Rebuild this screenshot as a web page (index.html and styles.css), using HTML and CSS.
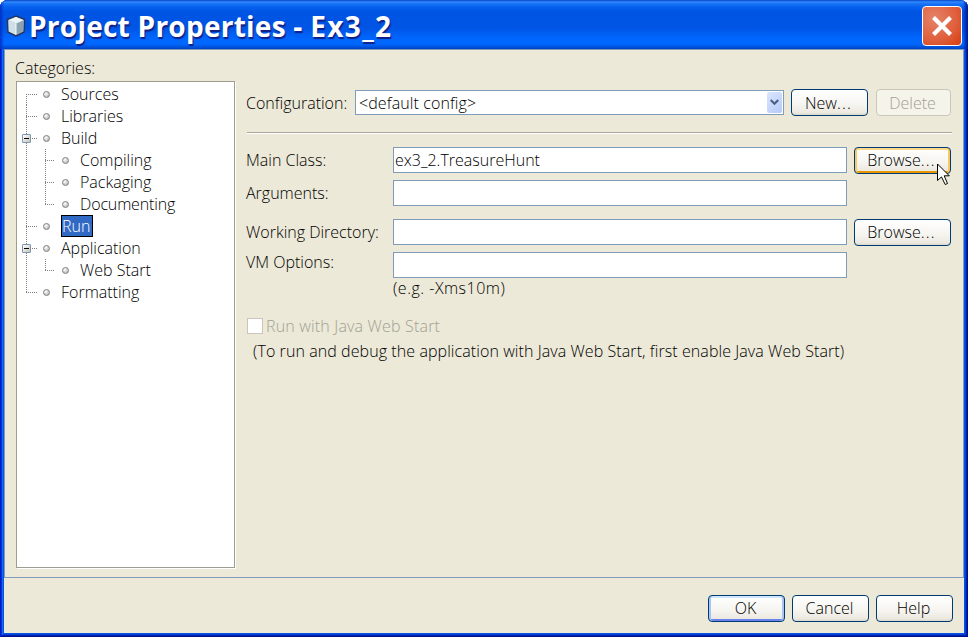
FILE: index.html
```html
<!DOCTYPE html>
<html lang="en">
<head>
<meta charset="utf-8">
<title>Project Properties - Ex3_2</title>
<link rel="stylesheet" href="styles.css">
</head>
<body>
<div class="window">
  <header class="titlebar">
    <svg class="app-icon" width="20" height="22" viewBox="0 0 20 22">
      <path d="M10 1 18.500 4.500 18 17 10 20.800 2 17 1.500 4.500Z" fill="#b7c9d2" stroke="#25355c" stroke-width="1.500"/>
      <path d="M10 2 17.500 5 10 8.500 2.500 5Z" fill="#e9f4fa"/>
      <path d="M2.500 5.500 10 8.800V20L2.800 16.500Z" fill="#cfe0e6"/>
      <path d="M10 8.800 17.500 5.500 17.200 16.500 10 20Z" fill="#8ba3b3"/>
      <path d="M10 8.500V19.500" stroke="#f2fbff"/>
    </svg>
    <h1 class="title">Project Properties - <span class="name">Ex3_2</span></h1>
    <button class="close" aria-label="Close"><svg width="22" height="22" viewBox="0 0 22 22"><path d="M2.500 2.500 19.500 19.500M19.500 2.500 2.500 19.500" stroke="#fff" stroke-width="4.200"/></svg></button>
  </header>
  <main class="panel">
    <section class="sidebar">
      <div class="caption">Categories:</div>
      <ul class="tree">
        <li class="node first"><i class="dot"></i>Sources</li>
        <li class="node"><i class="dot"></i>Libraries</li>
        <li class="node open"><i class="toggle"></i><i class="dot"></i>Build</li>
        <li class="node child"><i class="branch"></i><i class="dot"></i>Compiling</li>
        <li class="node child"><i class="branch"></i><i class="dot"></i>Packaging</li>
        <li class="node child end"><i class="branch"></i><i class="dot"></i><span class="tight">Documenting</span></li>
        <li class="node"><i class="dot"></i><span class="selected">Run</span></li>
        <li class="node open"><i class="toggle"></i><i class="dot"></i>Application</li>
        <li class="node child end"><i class="branch"></i><i class="dot"></i>Web Start</li>
        <li class="node last"><i class="dot"></i>Formatting</li>
      </ul>
    </section>
    <section class="form">
      <div class="config">
        <label>Configuration:</label>
        <div class="select">&lt;default config&gt;<span class="arrow"><svg width="9" height="7" viewBox="0 0 9 7"><path d="M.700 1 4.500 4.800 8.300 1" fill="none" stroke="#4d6185" stroke-width="2.200"/></svg></span></div>
        <button class="btn">New<span class="dots">...</span></button>
        <button class="btn disabled">Delete</button>
      </div>
      <hr>
      <div class="fields">
        <label>Main Class:</label><div class="input">ex3_2.TreasureHunt</div>
        <button class="btn hot">Browse<span class="dots">...</span>
          <svg class="cursor" width="14" height="23" viewBox="0 0 14 23"><path d="M.500 1V17.500L4.500 13.900 8.200 21.500 10.500 20.500 7.200 12.800H12.300Z" fill="#fff" stroke="#000"/></svg>
        </button>
        <label>Arguments:</label><div class="input"></div><span></span>
        <label>Working Directory:</label><div class="input"></div><button class="btn">Browse<span class="dots">...</span></button>
        <label class="raised">VM Options:</label><div class="input"></div>
      </div>
      <div class="hint">(e.g. -Xms10m)</div>
      <div class="check"><i class="box"></i>Run with Java Web Start</div>
      <div class="note">(To run and debug the application with Java Web Start, first enable Java Web Start)</div>
    </section>
  </main>
  <footer class="actions">
    <button class="btn default">OK</button>
    <button class="btn">Cancel</button>
    <button class="btn">Help</button>
  </footer>
</div>
</body>
</html>
```
FILE: styles.css
```css
* { box-sizing: border-box; }
body { margin: 0; overflow: hidden; background: #fff; color: #000; font: 300 16px/22px "Open Sans", "Noto Sans", sans-serif; }
.window { width: 968px; height: 637px; display: flex; flex-direction: column; padding: 0 4px 4px; border-radius: 8px 8px 0 0; overflow: hidden; background: #0855dd;
  box-shadow: inset 1px 0 #0019cf, inset -1px -1px #00138c, inset 2px 0 #0831d9, inset -2px -2px #001dad, inset 3px 0 #166aee, inset -3px -3px #0441d8; }
.titlebar { height: 49px; flex: none; margin: 0 -4px; padding: 0 6px; display: flex; align-items: center; background: linear-gradient(90deg, #0030c8 0, #0030c800 4px, #0030c800 963px, #001fa0 967px), linear-gradient(#0746c8 0, #3089fb 4%, #1b76f8 7%, #0762ef 14%, #0054e3 24%, #0055e5 58%, #0066fe 78%, #0067ff 90%, #0052dc 96%, #003dc2 100%); }
.app-icon { flex: none; margin-top: 3px; }
.title { flex: 1; margin: 3px 0 0 3px; color: #fff; font: 700 28px/40px "Open Sans", sans-serif; letter-spacing: .25px; text-shadow: 1px 2px 1px #0f1f85; white-space: nowrap; }
.name { letter-spacing: 1.4px; }
.close { width: 40px; height: 40px; margin: 3px 0 0; padding: 0; display: grid; place-items: center; border: 1px solid #fff; border-radius: 4px; background: radial-gradient(circle at 30% 30%, #e58368, #df5e3c 60%, #d63c0c); }
.panel { height: 529px; flex: none; display: flex; border: 1px solid #7f9db9; padding: 7px 11px 9px 11px; background: #ece9d8; }
.sidebar { width: 219px; flex: none; display: flex; flex-direction: column; }
.caption { height: 24px; margin-left: -1px; line-height: 22px; }
.tree { flex: 1; margin: 0; padding: 1px 0; list-style: none; background: #fff; border: 1px solid #9d9d92; box-shadow: 1px 1px #fff; }
.node { height: 22px; position: relative; display: flex; align-items: center; padding-left: 26px; }
.node::before { content: ""; position: absolute; left: 9px; top: 0; bottom: 0; width: 1px; background: repeating-linear-gradient(#808080 0 1px, transparent 1px 2px); }
.node.first::before { top: 11px; }
.node.last::before { bottom: 10px; }
.node::after { content: ""; position: absolute; left: 9px; top: 11px; width: 11px; height: 1px; background: repeating-linear-gradient(90deg, #808080 0 1px, transparent 1px 2px); }
.node.child::after { left: 28px; width: 10px; }
.branch { position: absolute; left: 28px; top: 0; bottom: 0; width: 1px; background: repeating-linear-gradient(#808080 0 1px, transparent 1px 2px); }
.end .branch { bottom: 10px; }
.toggle { position: absolute; z-index: 1; left: 5px; top: 7px; width: 9px; height: 9px; border: 1px solid #7898b5; border-radius: 1px; background: linear-gradient(#000, #000) center / 5px 1px no-repeat, linear-gradient(135deg, #fff, #c9c2b3); }
.dot { width: 7px; height: 7px; flex: none; margin-right: 11px; border-radius: 50%; border: 1px solid #808080; background: radial-gradient(circle at 35% 30%, #fff, #aaa); }
.child { padding-left: 45px; }
.tight { letter-spacing: -.15px; }
.selected { width: 32px; height: 22px; background: #316ac5; color: #fff; border: 1px solid #000; line-height: 20px; }
.form { flex: 1; margin-left: 12px; padding-top: 32px; min-width: 0; }
.form label { margin-left: -1px; }
.config { display: flex; align-items: center; height: 27px; }
.config label { width: 109px; }
.select { width: 429px; height: 25px; margin-right: 7px; border: 1px solid #7f9db9; background: #fff; display: flex; align-items: center; justify-content: space-between; padding: 1px 1px 1px 3px; letter-spacing: .1px; }
.arrow { width: 15px; height: 21px; display: grid; place-items: center; border-radius: 2px; background: linear-gradient(135deg, #dbe5fe, #b5cafa); }
.btn { width: 77px; height: 27px; padding: 0 2px 0 0; margin: 0; position: relative; border: 1px solid #003c74; border-radius: 4px; background: linear-gradient(#fff, #f5f4ef 60%, #ece9e0 90%, #dcd7cd); color: #000; font: inherit; line-height: 24px; }
.dots { letter-spacing: 1.2px; }
.disabled { width: 75px; margin-left: 8px; border-color: #c9c7ba; background: #f5f4ea; color: #a1a192; }
hr { margin: 16px 0 13px; height: 2px; border: 0; background: #fff; border-top: 1px solid #aca899; }
.fields { display: grid; grid-template-columns: 146px 454px 97px; grid-template-rows: 33px 39px 33px 26px; align-items: start; }
.fields label { line-height: 26px; }
.fields .raised { line-height: 20px; }
.fields .btn { width: 97px; margin-left: 7px; }
.input { height: 26px; border: 1px solid #7f9db9; background: #fff; padding-left: 1px; line-height: 24px; }
.hot { box-shadow: inset 2px 0 #fac761, inset -2px 0 #fac761, inset 0 2px #fdd889, inset 0 -2px #e59700; }
.default { box-shadow: inset 2px 0 #a9c3f3, inset -2px 0 #a9c3f3, inset 0 2px #cee7ff, inset 0 -2px #6982ee; }
.cursor { position: absolute; left: 82px; top: 15px; }
.hint { padding-left: 146px; height: 22px; margin-top: -1px; letter-spacing: .5px; }
.check { display: flex; align-items: center; height: 22px; margin-top: 16px; color: #a1a192; letter-spacing: .18px; }
.box { width: 16px; height: 16px; margin-right: 3px; border: 1px solid #c9c7ba; background: #fff; }
.note { padding-left: 6px; margin-top: 3px; letter-spacing: .08px; }
.actions { flex: 1; display: flex; align-items: flex-start; justify-content: flex-end; gap: 7px; padding: 17px 11px 0; background: #ece9d8; }
.actions .btn, .fields .btn { line-height: 22px; padding-bottom: 2px; }
```
